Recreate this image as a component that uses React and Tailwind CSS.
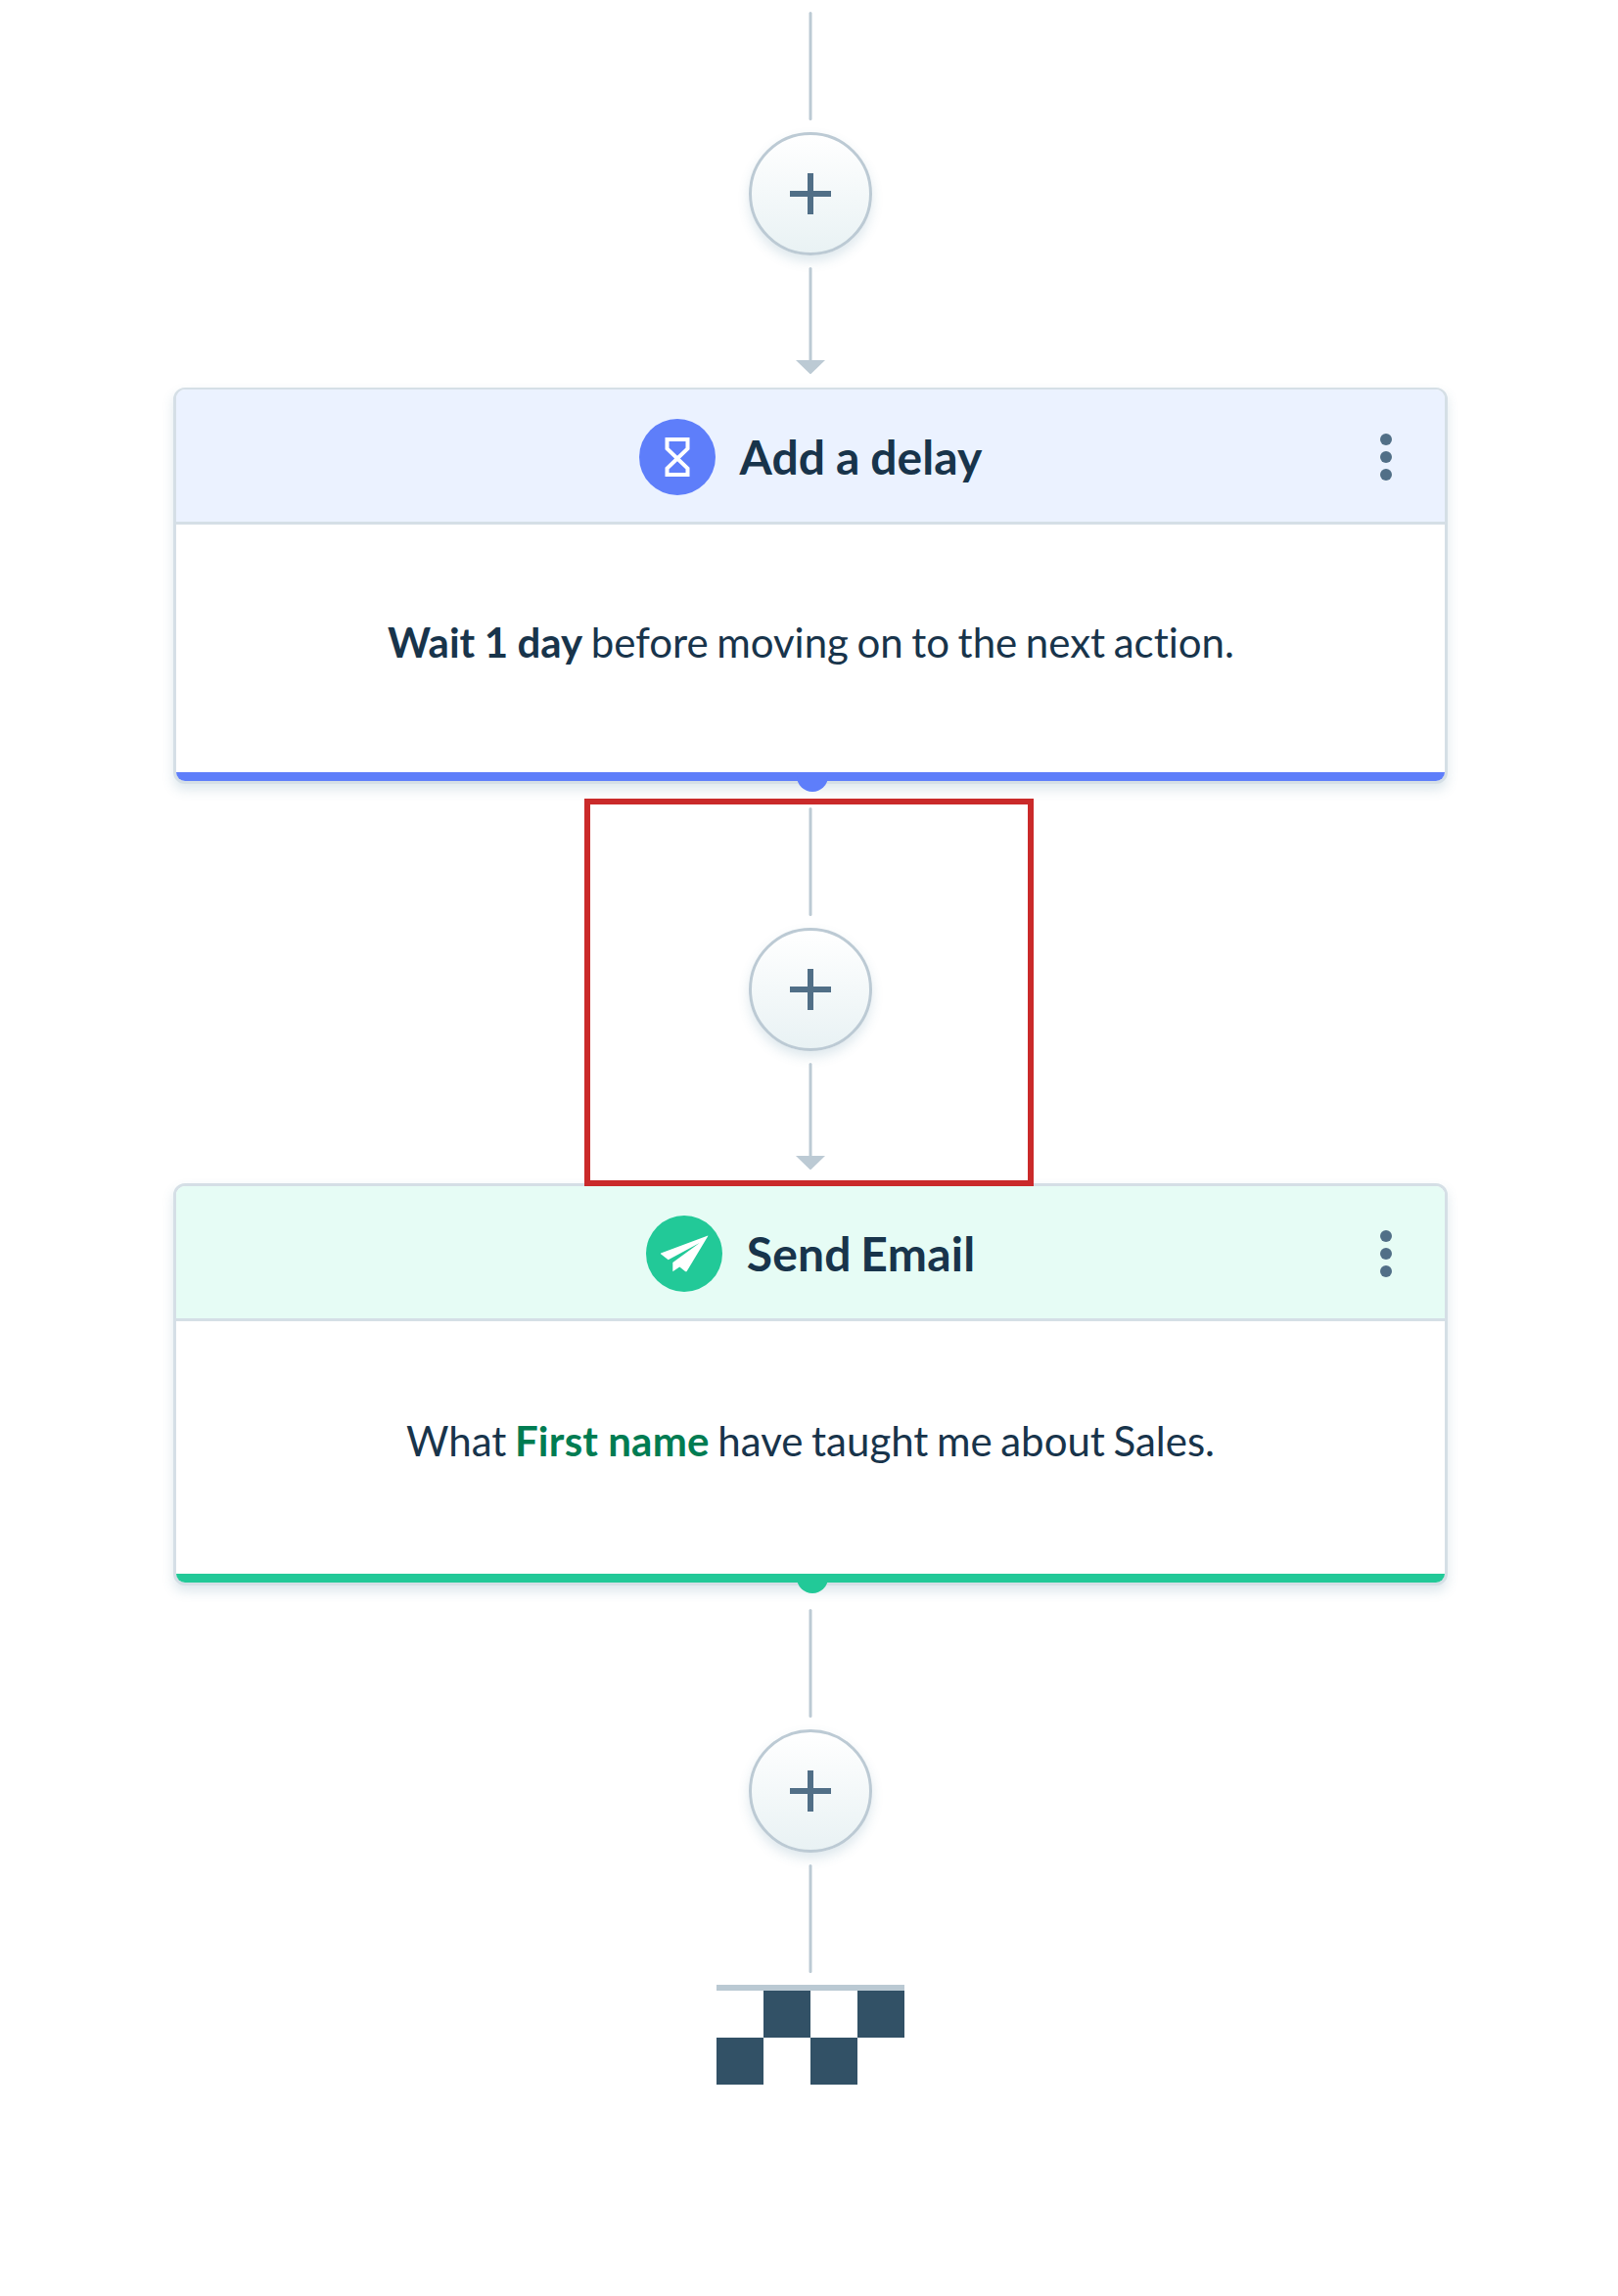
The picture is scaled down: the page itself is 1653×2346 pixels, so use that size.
function Line({ className = "" }) {
  return (
    <svg width="4" height="111" viewBox="0 0 4 111" className={`block shrink-0 ${className}`} fill="#bccad4">
      <rect x="0.5" width="3" height="111" rx="1.5" />
    </svg>
  );
}

function ArrowLine() {
  return (
    <svg width="30" height="109" viewBox="0 0 30 109" className="block shrink-0" fill="#bccad4">
      <rect x="13.5" y="0" width="3" height="98" rx="1.5" />
      <path d="M0 95H30L15 109.5Z" />
    </svg>
  );
}

function AddButton() {
  return (
    <button
      aria-label="Add step"
      className="my-3 flex size-[126px] shrink-0 items-center justify-center rounded-full border-3 border-[#bccad4] bg-linear-to-b from-white to-[#e9f2f4] shadow-[0_6px_12px_rgba(60,120,150,0.17)]"
    >
      <svg width="42" height="42" viewBox="0 0 42 42" fill="#516f87">
        <path d="M18 0h6v18h18v6H24v18h-6V24H0v-6h18z" />
      </svg>
    </button>
  );
}

function HourglassIcon() {
  return (
    <svg width="78" height="78" viewBox="0 0 78 78" fill="none" stroke="#fff" strokeWidth="4">
      <path d="M28.5 21H49.5V30.5L28.5 50.5V57H49.5V50.5L28.5 30.5Z" />
    </svg>
  );
}

function PlaneIcon() {
  return (
    <svg width="78" height="78" viewBox="0 0 78 78" fill="#fff">
      <path d="M63.3 20.5L15 38.5V39.3L22.7 45.3L54.7 28L27.3 48V57.2L34.3 52.6L40.3 57.2H41.5L63.3 21Z" />
    </svg>
  );
}

function Dots() {
  return (
    <button aria-label="More options" className="flex w-3 flex-col gap-1.5">
      <span className="size-3 rounded-full bg-[#516f87]" />
      <span className="size-3 rounded-full bg-[#516f87]" />
      <span className="size-3 rounded-full bg-[#516f87]" />
    </button>
  );
}

function Card({ className, headerClass, accentClass, titleClass, bodyClass, icon, title, children }) {
  return (
    <section
      className={`relative flex w-[1302px] shrink-0 flex-col rounded-xl border-3 border-[#d5dfe6] bg-white shadow-[0_6px_12px_rgba(60,120,150,0.17)] ${className}`}
    >
      <header
        className={`grid h-[138px] shrink-0 grid-cols-[66px_1fr_66px] items-center rounded-t-[9px] border-b-3 border-[#d5dfe6] pt-[3px] ${headerClass}`}
      >
        <span />
        <div className="flex items-center justify-center gap-[25px]">
          <span className={`size-[78px] rounded-full ${accentClass}`}>{icon}</span>
          <h2 className={`text-5xl leading-[58px] font-bold whitespace-nowrap ${titleClass}`}>{title}</h2>
        </div>
        <Dots />
      </header>
      <p
        className={`flex flex-1 items-center justify-center text-[42px] whitespace-pre [font-variant-ligatures:none] ${bodyClass}`}
      >
        <span>{children}</span>
      </p>
      <div className={`h-[9px] rounded-b-[9px] ${accentClass}`} />
      <div className={`absolute -bottom-[11px] left-[633.5px] h-4 w-8 rounded-b-full ${accentClass}`} />
    </section>
  );
}

function FinishFlag() {
  return (
    <div className="mt-3 w-48 border-t-6 border-[#bac9d3]">
      <div className="grid grid-cols-4">
        <span className="size-12" />
        <span className="size-12 bg-[#325166]" />
        <span className="size-12" />
        <span className="size-12 bg-[#325166]" />
        <span className="size-12 bg-[#325166]" />
        <span className="size-12" />
        <span className="size-12 bg-[#325166]" />
        <span className="size-12" />
      </div>
    </div>
  );
}

export default function App() {
  return (
    <main className="relative flex h-[2346px] w-[1653px] flex-col items-center overflow-hidden bg-white pt-3 pl-[3px] font-[Lato,sans-serif] text-[#18344b]">
      <Line />
      <AddButton />
      <ArrowLine />

      <Card
        className="mt-[14px] h-[405px] border-t-2"
        headerClass="bg-[#ebf2ff]"
        accentClass="bg-[#5e7efa]"
        titleClass="tracking-[0.1px] [word-spacing:-1px]"
        bodyClass="pb-3 pl-px [word-spacing:-2.2px]"
        icon={<HourglassIcon />}
        title="Add a delay"
      >
        <b className="font-bold [word-spacing:-0.8px]">Wait 1 day</b> before moving on to the next action.
      </Card>

      <Line className="mt-6" />
      <AddButton />
      <ArrowLine />

      <Card
        className="mt-[14px] h-[411px]"
        headerClass="bg-[#e6fcf5]"
        accentClass="bg-[#22c998]"
        titleClass="tracking-[0.25px] [word-spacing:-2.4px]"
        bodyClass="pb-[14px] [word-spacing:-2.2px]"
        icon={<PlaneIcon />}
        title="Send Email"
      >
        What <b className="font-bold tracking-[0.25px] text-[#007c52] [word-spacing:-0.5px]">First name</b> have taught me
        about Sales.
      </Card>

      <Line className="mt-6" />
      <AddButton />
      <Line />
      <FinishFlag />

      <div className="pointer-events-none absolute top-[816px] left-[597px] h-[396px] w-[459px] border-6 border-[#ca2a2a]" />
    </main>
  );
}
